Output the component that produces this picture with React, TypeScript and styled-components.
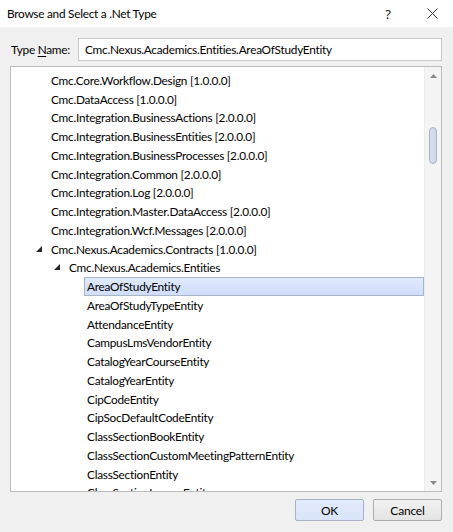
import React from "react";
import styled, { createGlobalStyle } from "styled-components";

const Global = createGlobalStyle`
  html, body { margin: 0; padding: 0; background: #f0f0f0; }
  body {
    font-family: Lato, "Noto Sans", sans-serif;
    font-size: 11.8px;
    letter-spacing: -0.25px;
    color: #000;
  }
`;

const Window = styled.div`
  width: 453px;
  height: 532px;
  display: flex;
  flex-direction: column;
  background: #f0f0f0;
  overflow: hidden;
`;

const TitleBar = styled.div`
  height: 27px;
  flex: none;
  background: #fff;
  display: flex;
  align-items: center;
  padding-left: 7px;
`;

const Title = styled.span`
  flex: 1;
  font-size: 11.8px;
  color: #000;
`;

const TitleButton = styled.div<{ $w: number }>`
  width: ${(p) => p.$w}px;
  height: 27px;
  display: flex;
  align-items: center;
  justify-content: center;
  color: #222;
  font-family: "Noto Sans", sans-serif;
  font-size: 13px;
  letter-spacing: 0;
`;

const Body = styled.div`
  flex: 1;
  display: flex;
  flex-direction: column;
  padding: 11px 11px 0 10px;
`;

const FieldRow = styled.div`
  display: flex;
  align-items: center;
  height: 23px;
`;

const Label = styled.label`
  width: 68px;
  flex: none;
  padding-left: 1px;
  box-sizing: border-box;
  white-space: nowrap;
  color: #000;
  u { text-decoration: underline; text-underline-offset: 2px; }
`;

const Input = styled.div`
  flex: 1;
  height: 23px;
  box-sizing: border-box;
  border: 1px solid #c8c8c8;
  background: #fff;
  display: flex;
  align-items: center;
  padding-left: 6px;
`;

const TreeBox = styled.div`
  margin-top: 5px;
  height: 426px;
  box-sizing: border-box;
  border: 1px solid #bcbcbc;
  background: #fff;
  display: flex;
`;

const TreeList = styled.div`
  flex: 1;
  overflow: hidden;
  padding-top: 4px;
`;

const Row = styled.div<{ $level: number }>`
  height: 18.75px;
  display: flex;
  align-items: center;
  padding-left: ${(p) => 22 + p.$level * 18}px;
  white-space: nowrap;
`;

const Expander = styled.span`
  width: 18px;
  height: 18px;
  flex: none;
  display: flex;
  align-items: center;
  justify-content: flex-start;
  padding-left: 3px;
  box-sizing: border-box;
`;

const Item = styled.span<{ $selected?: boolean }>`
  display: flex;
  align-items: center;
  height: 19px;
  box-sizing: border-box;
  padding: 0 2px;
  margin-left: -3px;
  border: 1px solid ${(p) => (p.$selected ? "#a8b4c8" : "transparent")};
  background: ${(p) =>
    p.$selected ? "linear-gradient(#e0eafd, #d0ddfb)" : "transparent"};
  width: ${(p) => (p.$selected ? "340px" : "auto")};
`;

const ScrollBar = styled.div`
  width: 16px;
  flex: none;
  background: #f4f4f4;
  border-left: 1px solid #ececec;
  display: flex;
  flex-direction: column;
  align-items: center;
`;

const Arrow = styled.div`
  height: 17px;
  width: 16px;
  display: flex;
  align-items: center;
  justify-content: center;
`;

const ThumbTrack = styled.div`
  flex: 1;
  width: 100%;
  display: flex;
  justify-content: center;
`;

const Thumb = styled.div`
  margin-top: 43px;
  width: 8px;
  height: 37px;
  box-sizing: border-box;
  border: 1px solid #a9b3c6;
  border-radius: 4px;
  background: linear-gradient(90deg, #d6deee, #cfd8ea);
`;

const ButtonRow = styled.div`
  margin-top: 7px;
  display: flex;
  justify-content: flex-end;
  gap: 9px;
`;

const Button = styled.button<{ $default?: boolean }>`
  width: 69px;
  height: 22px;
  box-sizing: border-box;
  border: 1px solid ${(p) => (p.$default ? "#a8b2c6" : "#adadad")};
  border-radius: 2px;
  background: ${(p) =>
    p.$default ? "linear-gradient(#e3ebfb, #d9e4fa)" : "linear-gradient(#f2f2f2, #e4e4e4)"};
  font-family: Lato, "Noto Sans", sans-serif;
  font-size: 12px;
  letter-spacing: -0.2px;
  color: #000;
  padding: 0;
`;

const Tri = () => (
  <svg width="7" height="7" viewBox="0 0 7 7">
    <polygon points="6,0 6,6 0,6" fill="#262626" />
  </svg>
);

const ArrowIcon = ({ down }: { down?: boolean }) => (
  <svg width="7" height="4" viewBox="0 0 7 4">
    <polygon points={down ? "0,0 7,0 3.5,4" : "0,4 7,4 3.5,0"} fill="#8a8a8a" />
  </svg>
);

type Node = { text: string; level: number; expanded?: boolean; selected?: boolean };

const nodes: Node[] = [
  { text: "Cmc.Core.Workflow.Design [1.0.0.0]", level: 0 },
  { text: "Cmc.DataAccess [1.0.0.0]", level: 0 },
  { text: "Cmc.Integration.BusinessActions [2.0.0.0]", level: 0 },
  { text: "Cmc.Integration.BusinessEntities [2.0.0.0]", level: 0 },
  { text: "Cmc.Integration.BusinessProcesses [2.0.0.0]", level: 0 },
  { text: "Cmc.Integration.Common [2.0.0.0]", level: 0 },
  { text: "Cmc.Integration.Log [2.0.0.0]", level: 0 },
  { text: "Cmc.Integration.Master.DataAccess [2.0.0.0]", level: 0 },
  { text: "Cmc.Integration.Wcf.Messages [2.0.0.0]", level: 0 },
  { text: "Cmc.Nexus.Academics.Contracts [1.0.0.0]", level: 0, expanded: true },
  { text: "Cmc.Nexus.Academics.Entities", level: 1, expanded: true },
  { text: "AreaOfStudyEntity", level: 2, selected: true },
  { text: "AreaOfStudyTypeEntity", level: 2 },
  { text: "AttendanceEntity", level: 2 },
  { text: "CampusLmsVendorEntity", level: 2 },
  { text: "CatalogYearCourseEntity", level: 2 },
  { text: "CatalogYearEntity", level: 2 },
  { text: "CipCodeEntity", level: 2 },
  { text: "CipSocDefaultCodeEntity", level: 2 },
  { text: "ClassSectionBookEntity", level: 2 },
  { text: "ClassSectionCustomMeetingPatternEntity", level: 2 },
  { text: "ClassSectionEntity", level: 2 },
  { text: "ClassSectionLessonEntity", level: 2 },
];

export default function App() {
  return (
    <Window>
      <Global />
      <TitleBar>
        <Title>Browse and Select a .Net Type</Title>
        <TitleButton $w={46}>?</TitleButton>
        <TitleButton $w={42}>
          <svg width="11" height="11" viewBox="0 0 11 11">
            <path d="M0.5 0.5 L10.5 10.5 M10.5 0.5 L0.5 10.5" stroke="#333" strokeWidth="1" />
          </svg>
        </TitleButton>
      </TitleBar>
      <Body>
        <FieldRow>
          <Label>
            Type <u>N</u>ame:
          </Label>
          <Input>Cmc.Nexus.Academics.Entities.AreaOfStudyEntity</Input>
        </FieldRow>
        <TreeBox>
          <TreeList>
            {nodes.map((n, i) => (
              <Row key={i} $level={n.level}>
                <Expander>{n.expanded ? <Tri /> : null}</Expander>
                <Item $selected={n.selected}>{n.text}</Item>
              </Row>
            ))}
          </TreeList>
          <ScrollBar>
            <Arrow>
              <ArrowIcon />
            </Arrow>
            <ThumbTrack>
              <Thumb />
            </ThumbTrack>
            <Arrow>
              <ArrowIcon down />
            </Arrow>
          </ScrollBar>
        </TreeBox>
        <ButtonRow>
          <Button $default>OK</Button>
          <Button>Cancel</Button>
        </ButtonRow>
      </Body>
    </Window>
  );
}
